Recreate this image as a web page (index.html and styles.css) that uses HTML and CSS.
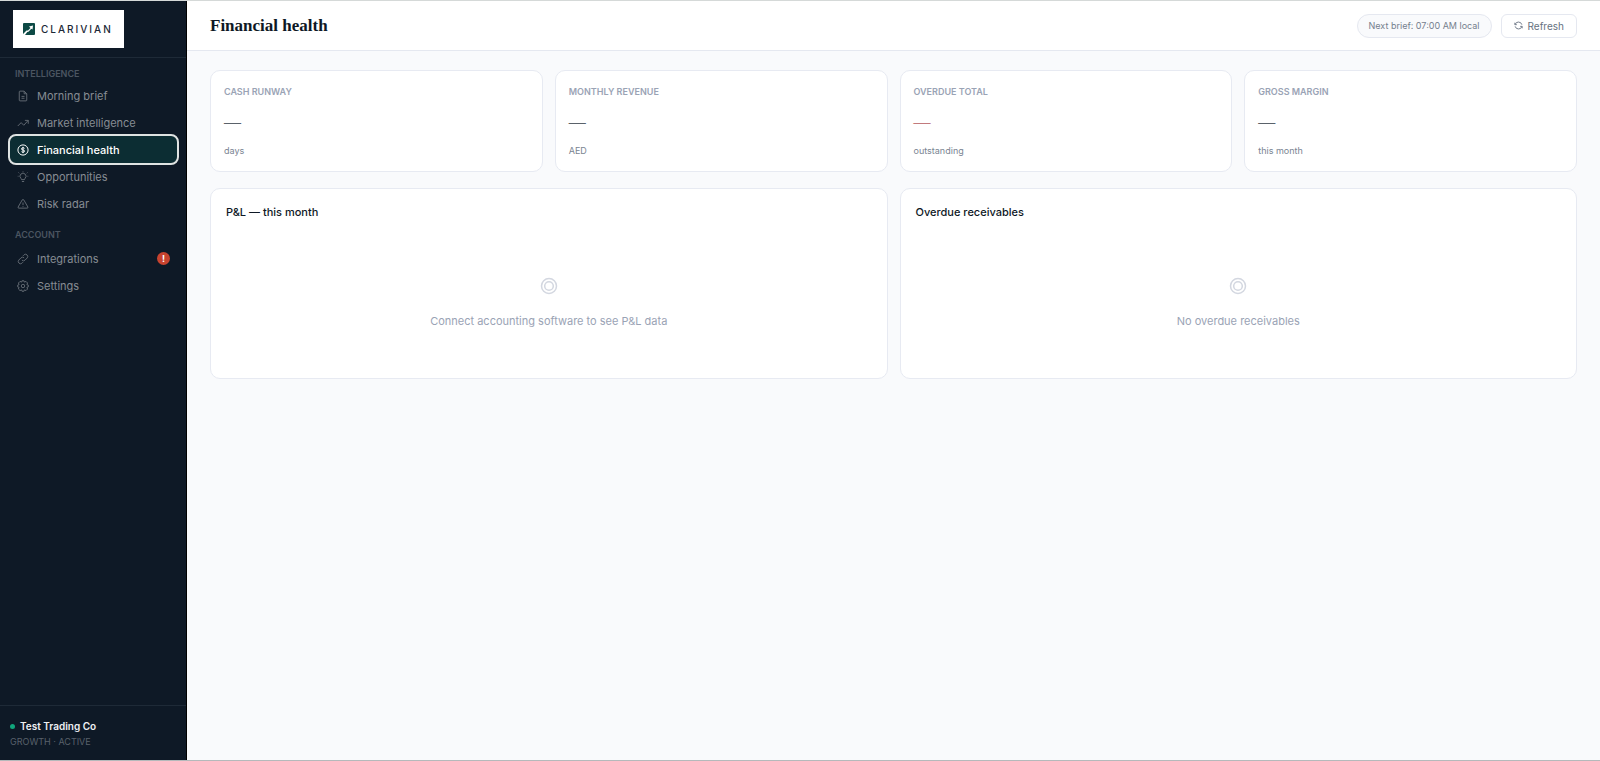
FILE: index.html
```html
<!DOCTYPE html>
<html lang="en">
<head>
    <meta charset="UTF-8">
    <meta name="viewport" content="width=device-width, initial-scale=1.0">
    <title>Clarivian - Financial health</title>
    <link rel="stylesheet" href="styles.css">
</head>
<body>
    <div class="app">
        <aside class="sidebar">
            <div class="sidebar-top">
                <a class="logo" href="#">
                    <svg class="logo-mark" viewBox="0 0 12 12">
                        <rect width="12" height="12" rx="1" fill="#0d4a45"/>
                        <path d="M0 12 V11 L3.500 7.500 L5 7.500 L7.500 5 L6 3.500 L10 2.500 L9.500 6.500 L8.300 5.700 L5.500 8.700 L4.300 9 L2 12 Z" fill="#fff"/>
                    </svg>
                    <span class="logo-text">CLARIVIAN</span>
                </a>
            </div>

            <nav class="nav">
                <h2 class="nav-label">INTELLIGENCE</h2>
                <a class="nav-item" href="#">
                    <svg class="icon" viewBox="0 0 16 16"><path d="M3 2.500 Q3 1.500 4 1.500 H9.500 L13 5 V13.500 Q13 14.500 12 14.500 H4 Q3 14.500 3 13.500 Z M9.500 1.500 V5 H13 M6 8.500 H10 M6 11 H10"/></svg>
                    Morning brief
                </a>
                <a class="nav-item" href="#">
                    <svg class="icon" viewBox="0 0 16 16"><path d="M1 12 L5.500 7.500 L9 11 L15 4.500 M10.500 4.500 H15 V9"/></svg>
                    Market intelligence
                </a>
                <a class="nav-item active" href="#">
                    <svg class="icon" viewBox="0 0 16 16"><circle cx="8" cy="8" r="6.800"/><path d="M10 5.800 Q9.500 5 8 5 Q6 5 6 6.500 Q6 8 8 8 Q10 8 10 9.500 Q10 11 8 11 Q6.500 11 6 10.200 M8 3.800 V12.200"/></svg>
                    Financial health
                </a>
                <a class="nav-item" href="#">
                    <svg class="icon" viewBox="0 0 16 16"><path d="M6 11.500 Q6 10.500 5.200 9.800 A4 4 0 1 1 10.800 9.800 Q10 10.500 10 11.500 Z M6.500 14 H9.500 M8 .5 V1.500 M2 2 L3 3 M14 2 L13 3 M1 7 H2 M14 7 H15"/></svg>
                    Opportunities
                </a>
                <a class="nav-item" href="#">
                    <svg class="icon" viewBox="0 0 16 16"><path d="M7 2.500 Q8 1 9 2.500 L14.500 12 Q15 13.500 13.500 13.500 H2.500 Q1 13.500 1.500 12 Z M8 6 V9.500 M8 11 V12"/></svg>
                    Risk radar
                </a>

                <h2 class="nav-label">ACCOUNT</h2>
                <a class="nav-item" href="#">
                    <svg class="icon" viewBox="0 0 16 16"><path d="M6.500 9.500 A3 3 0 0 0 10.700 9.500 L13.700 6.500 A3 3 0 0 0 9.500 2.300 L8 3.800 M9.500 6.500 A3 3 0 0 0 5.300 6.500 L2.300 9.500 A3 3 0 0 0 6.500 13.700 L8 12.200"/></svg>
                    Integrations
                    <span class="badge">!</span>
                </a>
                <a class="nav-item" href="#">
                    <svg class="icon" viewBox="0 0 16 16"><path d="M6.700 1 H9.300 L9.800 2.800 L12 1.900 L14.100 4 L13.200 6.200 L15 6.700 V9.300 L13.200 9.800 L14.100 12 L12 14.100 L9.800 13.200 L9.300 15 H6.700 L6.200 13.200 L4 14.100 L1.900 12 L2.800 9.800 L1 9.300 V6.700 L2.800 6.200 L1.900 4 L4 1.900 L6.200 2.800 Z"/><circle cx="8" cy="8" r="2.300"/></svg>
                    Settings
                </a>
            </nav>

            <div class="account">
                <div class="account-name"><span class="dot"></span>Test Trading Co</div>
                <div class="account-plan">GROWTH · ACTIVE</div>
            </div>
        </aside>

        <main class="main">
            <header class="topbar">
                <h1>Financial health</h1>
                <span class="pill">Next brief: 07:00 AM local</span>
                <button class="refresh" type="button">
                    <svg class="refresh-icon" viewBox="0 0 16 16"><path d="M1.500 3 V6.500 H5 M2 6 A6.300 6.300 0 0 1 14 6.500 M14.500 13 V9.500 H11 M14 10 A6.300 6.300 0 0 1 2 9.500"/></svg>
                    Refresh
                </button>
            </header>

            <div class="content">
                <section class="stats">
                    <div class="card stat">
                        <div class="stat-label">CASH RUNWAY</div>
                        <div class="stat-value">—</div>
                        <div class="stat-note">days</div>
                    </div>
                    <div class="card stat">
                        <div class="stat-label">MONTHLY REVENUE</div>
                        <div class="stat-value">—</div>
                        <div class="stat-note">AED</div>
                    </div>
                    <div class="card stat">
                        <div class="stat-label">OVERDUE TOTAL</div>
                        <div class="stat-value overdue">—</div>
                        <div class="stat-note">outstanding</div>
                    </div>
                    <div class="card stat">
                        <div class="stat-label">GROSS MARGIN</div>
                        <div class="stat-value">—</div>
                        <div class="stat-note">this month</div>
                    </div>
                </section>

                <section class="panels">
                    <div class="card panel">
                        <h2>P&amp;L — this month</h2>
                        <div class="empty">
                            <svg class="empty-icon" viewBox="0 0 18 18"><circle cx="9" cy="9" r="7.500"/><circle cx="9" cy="9" r="4.300"/></svg>
                            <p>Connect accounting software to see P&amp;L data</p>
                        </div>
                    </div>
                    <div class="card panel">
                        <h2>Overdue receivables</h2>
                        <div class="empty">
                            <svg class="empty-icon" viewBox="0 0 18 18"><circle cx="9" cy="9" r="7.500"/><circle cx="9" cy="9" r="4.300"/></svg>
                            <p>No overdue receivables</p>
                        </div>
                    </div>
                </section>
            </div>
        </main>
    </div>
</body>
</html>
```
FILE: styles.css
```css
* {
    box-sizing: border-box;
}
body {
    margin: 0;
    font-family: 'Inter', 'Liberation Sans', sans-serif;
    font-size: 11px;
    color: #0e1825;
    background-color: #f9fafc;
}
h1, h2, p {
    margin: 0;
}
a {
    color: inherit;
    text-decoration: none;
}
svg {
    flex-shrink: 0;
}
.app {
    display: flex;
    min-height: 100vh;
    border-top: 1px solid #d5d9d8;
    border-bottom: 1px solid #b5b9bb;
}

/* Sidebar */
.sidebar {
    display: flex;
    flex-direction: column;
    flex-shrink: 0;
    width: 187px;
    background-color: #0e1926;
    border-right: 1px solid #000;
}
.sidebar-top {
    height: 57px;
    padding: 9px 13px;
    border-bottom: 1px solid #1e2a37;
}
.logo {
    display: flex;
    align-items: center;
    gap: 6px;
    width: 111px;
    height: 38px;
    padding: 0 10px;
    background-color: #fff;
}
.logo-mark {
    width: 12px;
    height: 12px;
}
.logo-text {
    font-size: 10px;
    font-weight: 500;
    letter-spacing: 2px;
    color: #1c2836;
}
.nav {
    flex: 1;
    padding: 9px 9px 9px 10px;
}
.nav-label {
    padding: 0 5px;
    margin-bottom: 1px;
    font-size: 9px;
    font-weight: 600;
    line-height: 14px;
    color: #4b5561;
}
.nav-item + .nav-label {
    margin-top: 11px;
    margin-bottom: 3px;
}
.nav-item {
    display: flex;
    align-items: center;
    gap: 8px;
    height: 27px;
    padding: 0 7px;
    border-radius: 6px;
    color: #868c93;
}
.nav-item.active {
    color: #fff;
    font-weight: 500;
    background-color: #0c2d33;
    outline: 2px solid #dfe3e2;
}
.icon {
    width: 12px;
    height: 12px;
    fill: none;
    stroke: currentColor;
    stroke-width: 1.3;
    opacity: 0.7;
}
.active .icon {
    opacity: 1;
}
.badge {
    width: 13px;
    height: 13px;
    margin-left: auto;
    border-radius: 50%;
    background-color: #c7432f;
    color: #fff;
    font-size: 9px;
    font-weight: 700;
    line-height: 13px;
    text-align: center;
}
.account {
    padding: 12px 10px 10px;
    border-top: 1px solid #1e2a37;
}
.account-name {
    display: flex;
    align-items: center;
    gap: 5px;
    font-size: 10px;
    font-weight: 600;
    line-height: 16px;
    color: #eef0f2;
}
.dot {
    width: 5px;
    height: 5px;
    border-radius: 50%;
    background-color: #10a57c;
}
.account-plan {
    font-size: 9px;
    line-height: 16px;
    color: #59616b;
}

/* Main area */
.main {
    flex: 1;
    min-width: 0;
}
.topbar {
    display: flex;
    align-items: center;
    gap: 9px;
    height: 50px;
    padding: 0 23px;
    background-color: #fff;
    border-bottom: 1px solid #e5e8f0;
}
.topbar h1 {
    flex: 1;
    font-family: 'Liberation Serif', serif;
    font-size: 17px;
    font-weight: 700;
}
.pill {
    padding: 0 11px;
    border: 1px solid #e5e8f0;
    border-radius: 12px;
    background-color: #f9fafc;
    font-size: 9px;
    line-height: 22px;
    color: #75808e;
}
.refresh {
    display: flex;
    align-items: center;
    gap: 5px;
    height: 24px;
    padding: 0 12px;
    border: 1px solid #e5e8f0;
    border-radius: 6px;
    background-color: #fff;
    font-family: inherit;
    font-size: 10px;
    color: #667180;
    cursor: pointer;
}
.refresh-icon {
    width: 9px;
    height: 9px;
    fill: none;
    stroke: currentColor;
    stroke-width: 1.6;
}
.content {
    padding: 19px 23px;
}
.card {
    background-color: #fff;
    border: 1px solid #e7eaf2;
    border-radius: 10px;
}
.stats {
    display: grid;
    grid-template-columns: repeat(4, 1fr);
    gap: 12px;
    margin-bottom: 16px;
}
.stat {
    padding: 14px 13px 13px;
}
.stat-label {
    font-size: 9px;
    font-weight: 600;
    line-height: 14px;
    color: #9aa3b5;
}
.stat-value {
    padding: 10px 0;
    font-family: 'Liberation Serif', serif;
    font-size: 17px;
    line-height: 25px;
    color: #5a626a;
}
.stat-value.overdue {
    color: #c27a7d;
}
.stat-note {
    font-size: 9px;
    line-height: 14px;
    color: #7a8492;
}
.panels {
    display: grid;
    grid-template-columns: repeat(2, 1fr);
    gap: 12px;
}
.panel {
    padding: 14px 15px 15px;
}
.panel h2 {
    font-size: 11px;
    font-weight: 500;
    line-height: 18px;
}
.empty {
    display: flex;
    flex-direction: column;
    align-items: center;
    gap: 17px;
    padding: 56px 0 33px;
    color: #9aa3b5;
}
.empty-icon {
    width: 18px;
    height: 18px;
    fill: none;
    stroke: #d3d7e0;
    stroke-width: 1.5;
}
.empty p {
    line-height: 18px;
}
```
